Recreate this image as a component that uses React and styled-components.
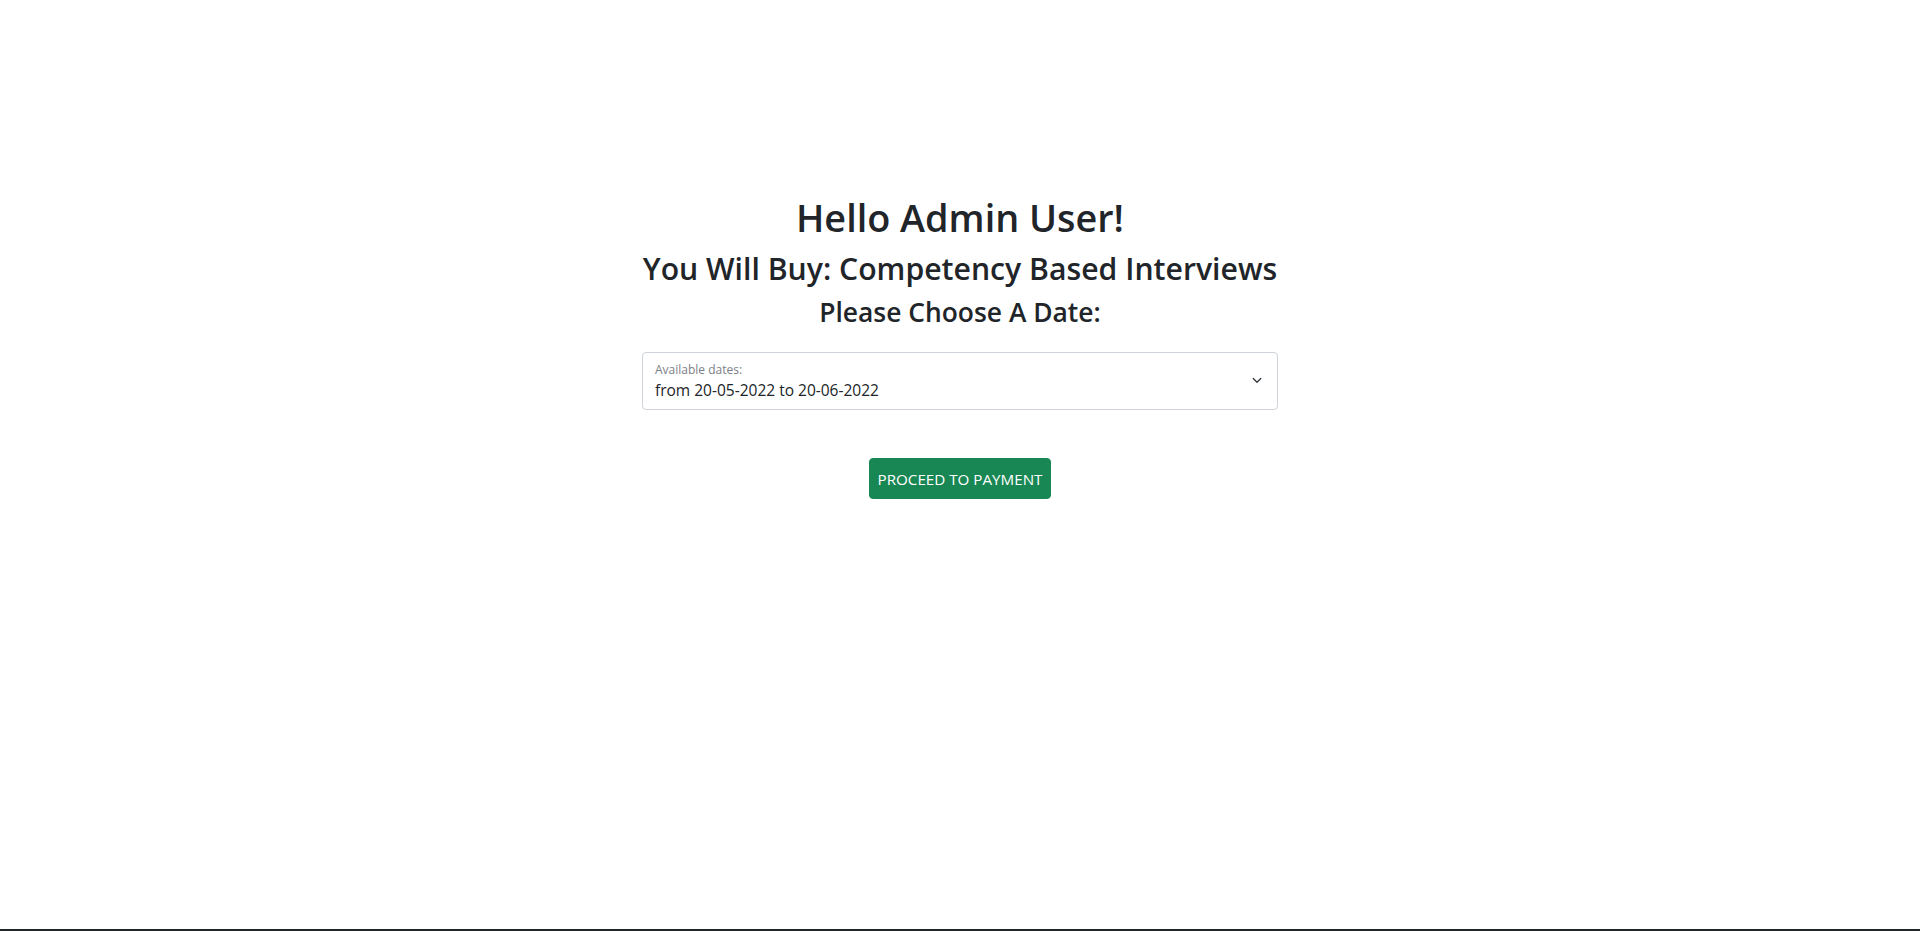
import React, { useState } from 'react';
import styled, { createGlobalStyle } from 'styled-components';

const GlobalStyle = createGlobalStyle`
  * { box-sizing: border-box; }
  body {
    margin: 0;
    font-family: "Open Sans", "Liberation Sans", sans-serif;
    color: #212529;
    background: #fff;
  }
`;

const dates = ['from 20-05-2022 to 20-06-2022'];

const App = () => {
  const [date, setDate] = useState(dates[0]);
  return (
    <>
      <GlobalStyle />
      <Main>
        <Column>
          <Title level={1}>Hello Admin User!</Title>
          <Title level={2}>You Will Buy: Competency Based Interviews</Title>
          <Title level={3}>Please Choose A Date:</Title>
          <Floating>
            <Select value={date} onChange={({ target }) => setDate(target.value)}>
              {dates.map((d) => (
                <option key={d}>{d}</option>
              ))}
            </Select>
            <FloatLabel>Available dates:</FloatLabel>
            <Chevron viewBox="0 0 16 16">
              <path
                fill="none"
                stroke="#343a40"
                strokeLinecap="round"
                strokeLinejoin="round"
                strokeWidth="1.8"
                d="m3 6 5 5 5-5"
              />
            </Chevron>
          </Floating>
          <PayButton type="button">PROCEED TO PAYMENT</PayButton>
        </Column>
      </Main>
      <Footer />
    </>
  );
};

export default App;

// font size / line box for each heading level
const sizes = {
  1: [37.8, 48],
  2: [30.2, 38.4],
  3: [26.4, 33.6],
};

const Main = styled.main`
  min-height: 929px;
  display: flex;
  justify-content: center;
  padding-top: 194px;
`;

const Column = styled.div`
  width: 636px;
  display: flex;
  flex-direction: column;
  align-items: center;
`;

const Title = styled.div`
  font-size: ${({ level }) => sizes[level][0]}px;
  line-height: ${({ level }) => sizes[level][1]}px;
  font-weight: 600;
  margin: 0 0 8px;
  text-align: center;
  white-space: nowrap;
`;

const Floating = styled.div`
  position: relative;
  width: 100%;
  margin-top: 14px;
`;

const Select = styled.select`
  display: block;
  width: 100%;
  height: 58px;
  padding: 26px 36px 8px 12px;
  font-family: inherit;
  font-size: 15.5px;
  color: #212529;
  background: #fff;
  border: 1px solid #ced4da;
  border-radius: 4px;
  appearance: none;
  outline: none;
`;

const FloatLabel = styled.label`
  position: absolute;
  top: 9px;
  left: 13px;
  font-size: 12px;
  color: #7b8086;
  pointer-events: none;
`;

const Chevron = styled.svg`
  position: absolute;
  right: 15px;
  top: 22px;
  width: 12px;
  height: 12px;
  pointer-events: none;
`;

const PayButton = styled.button`
  margin-top: 48px;
  width: 182px;
  height: 41px;
  padding: 0;
  font-family: inherit;
  font-size: 15.2px;
  color: #fff;
  background: #198754;
  border: 1px solid #198754;
  border-radius: 4px;
  cursor: pointer;
`;

const Footer = styled.footer`
  height: 40px;
  background: #212529;
`;
